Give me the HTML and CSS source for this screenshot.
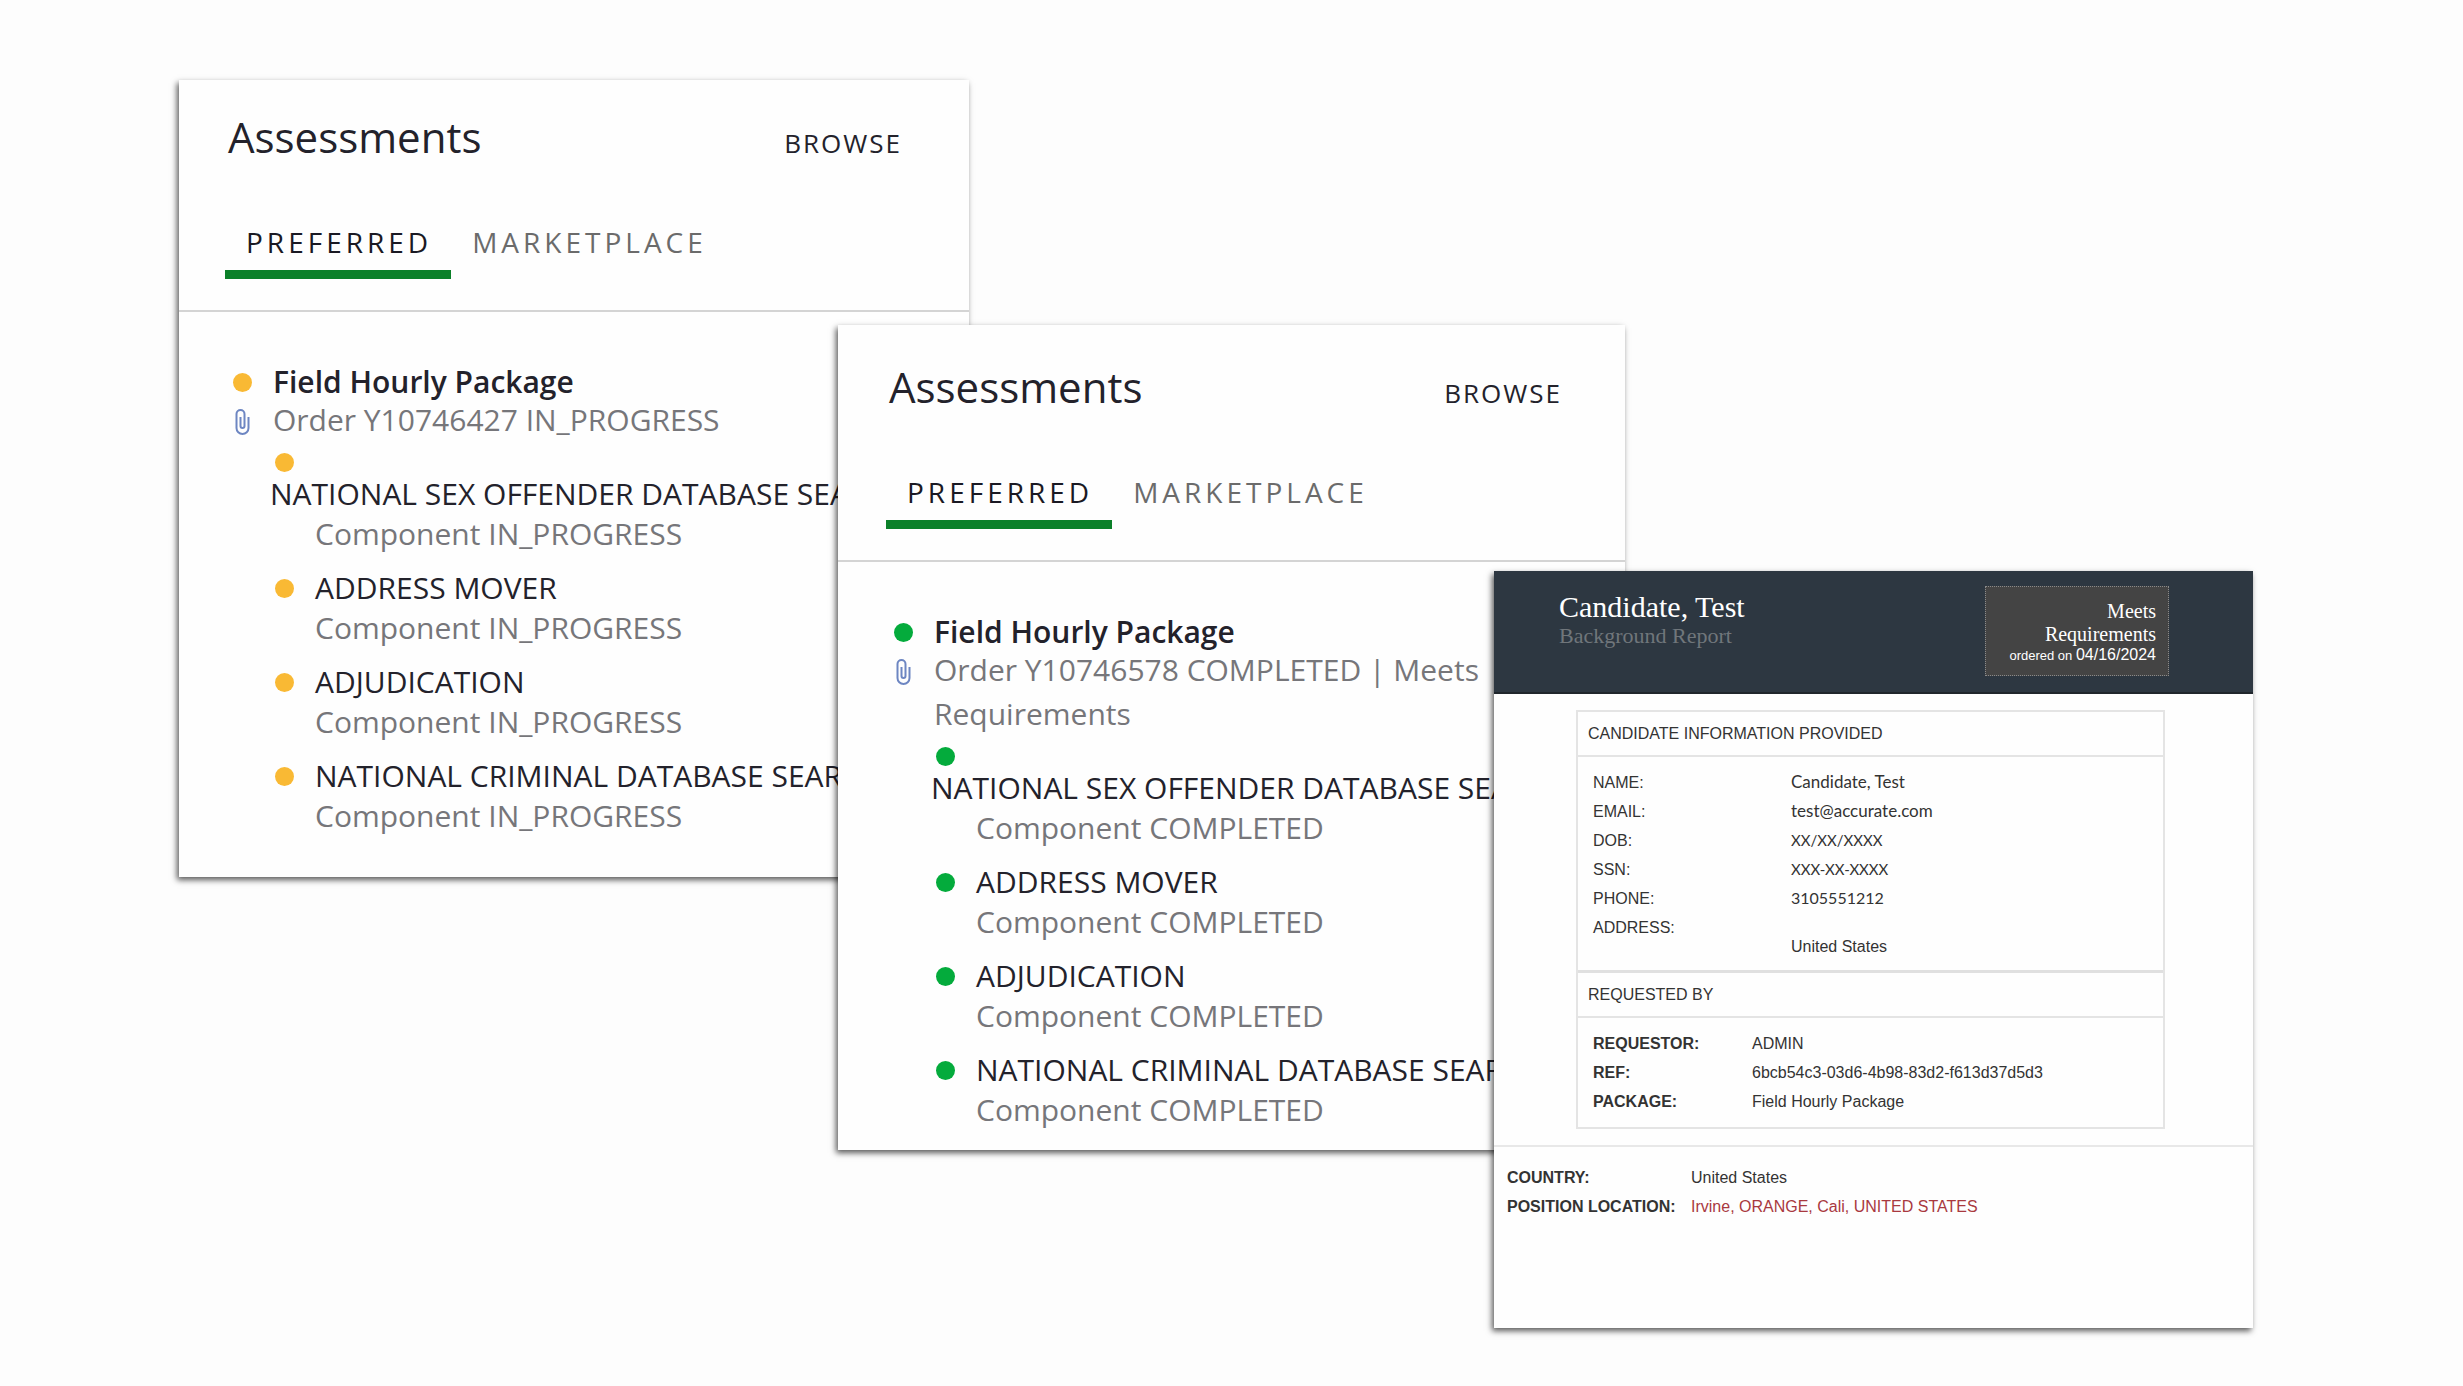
FILE: index.html
```html
<!DOCTYPE html>
<html lang="en">
<head>
    <meta charset="UTF-8">
    <meta name="viewport" content="width=device-width, initial-scale=1.0">
    <title>Assessments and Background Report</title>
    <link rel="stylesheet" href="styles.css">
</head>
<body>
    <main class="stage">
        <section class="card card-progress">
            <header class="card-header">
                <h2>Assessments</h2>
                <button class="browse-button">BROWSE</button>
            </header>
            <div class="tabs">
                <button class="tab active">PREFERRED</button>
                <button class="tab">MARKETPLACE</button>
            </div>
            <div class="package">
                <div class="package-row">
                    <span class="dot"></span>
                    <h3>Field Hourly Package</h3>
                </div>
                <div class="package-row">
                    <svg class="clip" viewBox="0 0 18 28" fill="none">
                        <path d="M3 8v12a6 6 0 0 0 12 0V9M3 8V6a4 4 0 0 1 8 0v12a2 2 0 0 1-4 0V9"/>
                    </svg>
                    <p class="status">Order Y10746427 IN_PROGRESS</p>
                </div>
                <ul class="components">
                    <li class="wrapped">
                        <span class="dot"></span>
                        <span class="name">NATIONAL SEX OFFENDER DATABASE SEARCH</span>
                        <span class="status">Component IN_PROGRESS</span>
                    </li>
                    <li>
                        <span class="dot"></span>
                        <span class="name">ADDRESS MOVER</span>
                        <span class="status">Component IN_PROGRESS</span>
                    </li>
                    <li>
                        <span class="dot"></span>
                        <span class="name">ADJUDICATION</span>
                        <span class="status">Component IN_PROGRESS</span>
                    </li>
                    <li>
                        <span class="dot"></span>
                        <span class="name">NATIONAL CRIMINAL DATABASE SEARCH</span>
                        <span class="status">Component IN_PROGRESS</span>
                    </li>
                </ul>
            </div>
        </section>

        <section class="card card-completed">
            <header class="card-header">
                <h2>Assessments</h2>
                <button class="browse-button">BROWSE</button>
            </header>
            <div class="tabs">
                <button class="tab active">PREFERRED</button>
                <button class="tab">MARKETPLACE</button>
            </div>
            <div class="package">
                <div class="package-row">
                    <span class="dot"></span>
                    <h3>Field Hourly Package</h3>
                </div>
                <div class="package-row">
                    <svg class="clip" viewBox="0 0 18 28" fill="none">
                        <path d="M3 8v12a6 6 0 0 0 12 0V9M3 8V6a4 4 0 0 1 8 0v12a2 2 0 0 1-4 0V9"/>
                    </svg>
                    <p class="status">Order Y10746578 COMPLETED | Meets Requirements</p>
                </div>
                <ul class="components">
                    <li class="wrapped">
                        <span class="dot"></span>
                        <span class="name">NATIONAL SEX OFFENDER DATABASE SEARCH</span>
                        <span class="status">Component COMPLETED</span>
                    </li>
                    <li>
                        <span class="dot"></span>
                        <span class="name">ADDRESS MOVER</span>
                        <span class="status">Component COMPLETED</span>
                    </li>
                    <li>
                        <span class="dot"></span>
                        <span class="name">ADJUDICATION</span>
                        <span class="status">Component COMPLETED</span>
                    </li>
                    <li>
                        <span class="dot"></span>
                        <span class="name">NATIONAL CRIMINAL DATABASE SEARCH</span>
                        <span class="status">Component COMPLETED</span>
                    </li>
                </ul>
            </div>
        </section>

        <section class="card report">
            <header class="report-header">
                <div>
                    <h1>Candidate, Test</h1>
                    <p class="subtitle">Background Report</p>
                </div>
                <div class="result">
                    <p class="verdict">Meets<br>Requirements</p>
                    <p class="ordered">ordered on <span class="date">04/16/2024</span></p>
                </div>
            </header>
            <div class="report-box">
                <h4>CANDIDATE INFORMATION PROVIDED</h4>
                <table class="candidate">
                    <tr><th>NAME:</th><td class="filled">Candidate, Test</td></tr>
                    <tr><th>EMAIL:</th><td class="filled">test@accurate.com</td></tr>
                    <tr><th>DOB:</th><td class="filled masked">XX/XX/XXXX</td></tr>
                    <tr><th>SSN:</th><td class="filled masked">XXX-XX-XXXX</td></tr>
                    <tr><th>PHONE:</th><td class="filled phone">3105551212</td></tr>
                    <tr class="address"><th>ADDRESS:</th><td>United States</td></tr>
                </table>
                <h4 class="requested">REQUESTED BY</h4>
                <table class="requestor">
                    <tr><th>REQUESTOR:</th><td>ADMIN</td></tr>
                    <tr><th>REF:</th><td>6bcb54c3-03d6-4b98-83d2-f613d37d5d3</td></tr>
                    <tr><th>PACKAGE:</th><td>Field Hourly Package</td></tr>
                </table>
            </div>
            <div class="report-footer">
                <table class="location">
                    <tr><th>COUNTRY:</th><td>United States</td></tr>
                    <tr><th>POSITION LOCATION:</th><td class="place">Irvine, ORANGE, Cali, UNITED STATES</td></tr>
                </table>
            </div>
        </section>
    </main>
</body>
</html>
```
FILE: styles.css
```css
* {
    box-sizing: border-box;
}
body {
    margin: 0;
    min-height: 100vh;
    background-color: #fdfdfd;
    font-family: "Open Sans", "Noto Sans", sans-serif;
    color: #23222b;
}
h1, h2, h3, h4, p, ul {
    margin: 0;
    padding: 0;
    font-weight: 400;
}
button {
    border: none;
    padding: 0;
    background: none;
    color: inherit;
    font-family: inherit;
    cursor: pointer;
}

/* the three cards share one grid row and overlap by column */
.stage {
    display: grid;
    grid-template-columns:
        minmax(0, 179fr) minmax(0, 659fr) minmax(0, 131fr) minmax(0, 525fr)
        minmax(0, 131fr) minmax(0, 628fr) minmax(0, 210fr);
    align-items: start;
}
.card {
    grid-row: 1;
    background-color: #fefefe;
    box-shadow: -2px 3px 6px rgba(0, 0, 0, 0.65);
    overflow: hidden;
}
.card-progress {
    grid-column: 2 / 4;
    margin-top: 80px;
    padding: 28px 0 39px;
}
.card-completed {
    grid-column: 3 / 6;
    margin-top: 325px;
    padding: 33px 0 18px;
}

/* assessments */
.card-header {
    display: flex;
    justify-content: space-between;
    align-items: baseline;
    padding: 0 67px 0 49px;
}
.card-completed .card-header {
    padding: 0 63px 0 51px;
}
.card-header h2 {
    font-size: 42px;
    line-height: 58px;
}
.browse-button {
    font-size: 26px;
    letter-spacing: 2px;
}
.tabs {
    display: flex;
    padding: 57px 46px 31px;
    border-bottom: 2px solid #d4d4d4;
}
.card-completed .tabs {
    padding-left: 48px;
}
.tab {
    padding: 0 19px 9px 21px;
    border-bottom: 9px solid transparent;
    font-size: 28px;
    line-height: 38px;
    letter-spacing: 4px;
    color: #6b6b6b;
}
.tab.active {
    border-bottom-color: #0b8029;
    color: #1a1923;
}
.package {
    padding: 54px 54px 0;
    font-size: 30px;
}
.card-completed .package {
    padding-left: 56px;
}
.package-row {
    display: flex;
    gap: 21px;
}
.package h3 {
    font-size: 30px;
    font-weight: 600;
    line-height: 32px;
}
.dot {
    flex: none;
    align-self: center;
    width: 19px;
    height: 19px;
    border-radius: 50%;
    background-color: #f9b934;
}
.card-completed .dot {
    background-color: #04ab3c;
}
.clip {
    flex: none;
    width: 19px;
    height: 28px;
    margin-top: 10px;
    stroke: #6d86c2;
    stroke-width: 2;
}
.status {
    line-height: 44px;
    color: #76767a;
}
.components {
    margin: 6px 0 0 42px;
    list-style: none;
    white-space: nowrap;
}
.components li {
    display: grid;
    grid-template-columns: 19px minmax(0, 1fr);
    column-gap: 21px;
}
.components li + li {
    margin-top: 14px;
}
.name {
    line-height: 36px;
}
.components .status {
    grid-column: 2;
}
.wrapped {
    grid-template-rows: 28px;
}
.wrapped .name {
    grid-column: 1 / 3;
    margin-left: -5px;
}

/* background report */
.report {
    grid-column: 5 / 7;
    margin-top: 571px;
    font-family: "Liberation Sans", Arial, sans-serif;
    font-size: 16px;
    color: #333;
}
.report-header {
    display: flex;
    justify-content: space-between;
    align-items: flex-start;
    padding: 15px 84px 16px 65px;
    border-bottom: 2px solid #20262c;
    background-color: #2d3741;
    font-family: "Liberation Serif", "Times New Roman", serif;
}
.report-header h1 {
    padding-top: 4px;
    font-size: 30px;
    line-height: 34px;
    color: #fff;
}
.subtitle {
    font-size: 22px;
    line-height: 24px;
    color: #70767b;
}
.result {
    width: 184px;
    padding: 13px 12px 10px;
    border: 1px dotted #8a8a8a;
    background-color: #444;
    text-align: right;
    color: #fff;
}
.verdict {
    font-size: 20px;
    line-height: 23px;
}
.ordered {
    font-family: "Liberation Sans", Arial, sans-serif;
    font-size: 13px;
    line-height: 18px;
}
.ordered .date {
    font-size: 16px;
}
.report-box {
    margin: 16px 88px 16px 82px;
    border: 2px solid #e4e4e4;
}
.report-box h4 {
    padding-left: 10px;
    border-bottom: 2px solid #e4e4e4;
    line-height: 43px;
}
.report-box h4.requested {
    border-top: 3px solid #e0e0e0;
}
table {
    border-collapse: collapse;
    white-space: nowrap;
}
th, td {
    padding: 0;
    line-height: 29px;
    text-align: left;
    vertical-align: baseline;
}
.candidate {
    margin: 11px 15px 9px;
}
.candidate th {
    width: 198px;
    font-weight: 400;
}
.filled {
    font-family: Lato, "Open Sans", sans-serif;
    font-size: 17px;
    line-height: 26px;
}
.masked {
    font-size: 15px;
}
.phone {
    font-size: 16px;
}
.address th, .address td {
    vertical-align: top;
}
.address td {
    padding-top: 19px;
}
.requestor {
    margin: 11px 15px;
}
.requestor th {
    width: 159px;
}
.report-footer {
    padding: 16px 13px 107px;
    border-top: 2px solid #e8e8e8;
}
.location th {
    width: 184px;
}
.place {
    color: #a9393f;
}
```
